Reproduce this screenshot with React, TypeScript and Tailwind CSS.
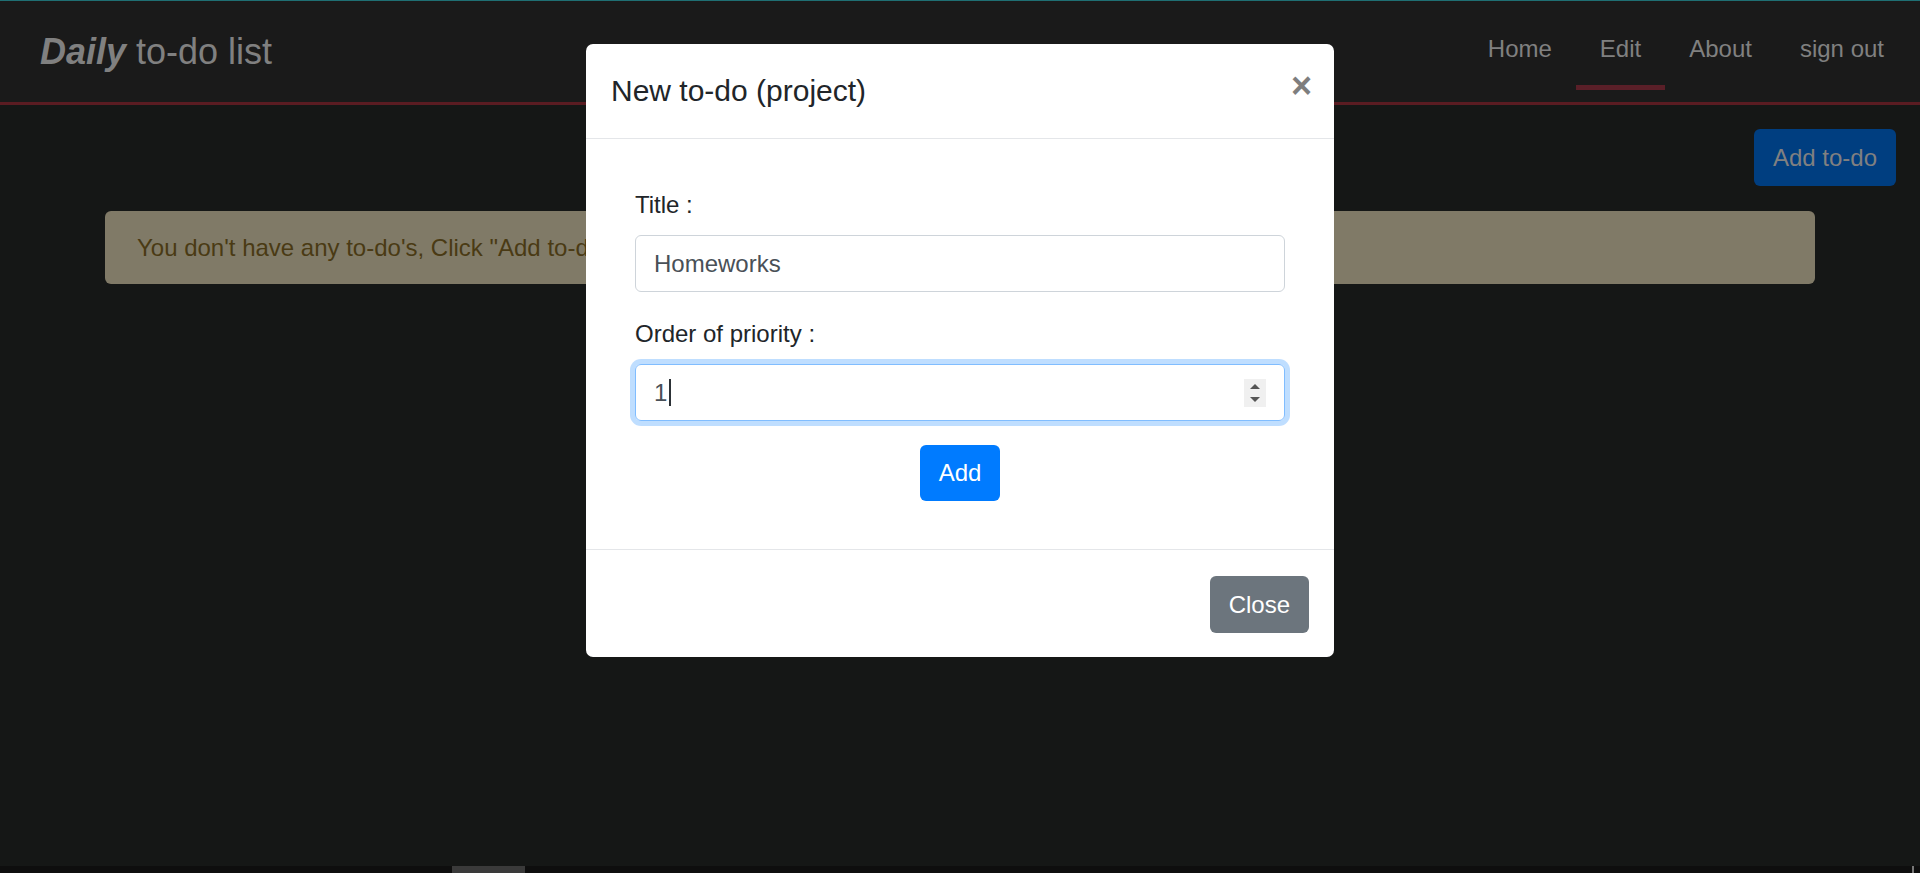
import React from 'react';

const navItems = ['Home', 'Edit', 'About', 'sign out'];

function Navbar() {
  return (
    <nav className="h-[105px] flex items-stretch border-t border-t-[#1f6f73] border-b-[3px] border-b-[#5a1c22] bg-[#1a1a1a]">
      <div className="flex items-center pl-[40px] text-[36px] leading-none text-[#808080]">
        <span className="font-bold italic">Daily</span>
        <span>&nbsp;to-do list</span>
      </div>
      <ul className="ml-auto flex items-start pr-[12px]">
        {navItems.map((item) => (
          <li key={item} className="flex flex-col items-stretch px-[24px] pt-[30px] text-[24px] leading-[36px] text-[#808080]">
            <span>{item}</span>
            <span
              className={
                item === 'Edit'
                  ? '-mx-[24px] mt-[18px] h-[5px] bg-[#5a1f28]'
                  : '-mx-[24px] mt-[18px] h-[5px] bg-transparent'
              }
            />
          </li>
        ))}
      </ul>
    </nav>
  );
}

function Spinner() {
  return (
    <div className="flex h-[28px] w-[22px] flex-col items-center justify-center gap-[8px] bg-[#f0f0f0]">
      <svg width="10" height="5" viewBox="0 0 10 5">
        <path d="M5 0L10 5H0z" fill="#555" />
      </svg>
      <svg width="10" height="5" viewBox="0 0 10 5">
        <path d="M0 0H10L5 5z" fill="#555" />
      </svg>
    </div>
  );
}

function NewTodoModal() {
  return (
    <div className="absolute left-0 right-0 top-[44px] flex justify-center">
      <div className="w-[748px] rounded-[7px] bg-white text-[#212529]">
        {/* header */}
        <div className="flex items-start border-b border-[#e4e6e9] pb-[25px] pl-[25px] pr-[24px] pt-[24px]">
          <h5 className="text-[30px] leading-[45px]">New to-do (project)</h5>
          <button className="ml-auto -mr-[2px] text-[36px] font-bold leading-[36px] text-black opacity-50">
            ×
          </button>
        </div>

        {/* body */}
        <div className="p-[24px]">
          <div className="px-[25px] pt-[24px]">
            <div className="mb-[24px]">
              <label className="mb-[12px] block text-[24px] leading-[36px]">Title :</label>
              <div className="flex h-[57px] items-center rounded-[6px] border border-[#ced4da] px-[18px] text-[24px] text-[#495057]">
                Homeworks
              </div>
            </div>
            <div className="mb-[24px]">
              <label className="mb-[12px] block text-[24px] leading-[36px]">Order of priority :</label>
              <div className="flex h-[57px] items-center rounded-[6px] border border-[#80bdff] px-[18px] text-[24px] text-[#495057] shadow-[0_0_0_5px_rgba(0,123,255,0.25)]">
                <span>1</span>
                <span className="ml-[2px] h-[27px] w-[2px] bg-[#2c3136]" />
                <div className="ml-auto">
                  <Spinner />
                </div>
              </div>
            </div>
            <div className="mb-[24px] text-center">
              <button className="h-[56px] rounded-[6px] bg-[#007bff] px-[19px] text-[24px] text-white">
                Add
              </button>
            </div>
          </div>
        </div>

        {/* footer */}
        <div className="flex justify-end border-t border-[#e4e6e9] pb-[24px] pr-[25px] pt-[26px]">
          <button className="h-[57px] rounded-[6px] bg-[#6c757d] px-[19px] text-[24px] text-white">
            Close
          </button>
        </div>
      </div>
    </div>
  );
}

export default function App() {
  return (
    <div className="relative flex h-[873px] w-full flex-col overflow-hidden bg-[#151716] font-['Liberation_Sans',Arial,sans-serif]">
      <Navbar />
      <main className="flex-1">
        <div className="flex justify-end pr-[24px] pt-[24px]">
          <button className="h-[57px] rounded-[6px] bg-[#003e80] px-[19px] text-[24px] text-[#808080]">
            Add to-do
          </button>
        </div>
        <div className="mx-[105px] mt-[25px] flex h-[73px] items-center rounded-[6px] bg-[#807a67] px-[32px] text-[24px] text-[#4a3a14]">
          You don't have any to-do's, Click "Add to-do" button to add one.
        </div>
      </main>
      {/* horizontal scrollbar strip */}
      <div className="flex h-[7px] bg-[#0e0e0e]">
        <div className="ml-[452px] w-[73px] bg-[#3a3a3a]" />
        <div className="ml-auto mr-[6px] w-[2px] bg-[#777777]" />
      </div>
      <NewTodoModal />
    </div>
  );
}
